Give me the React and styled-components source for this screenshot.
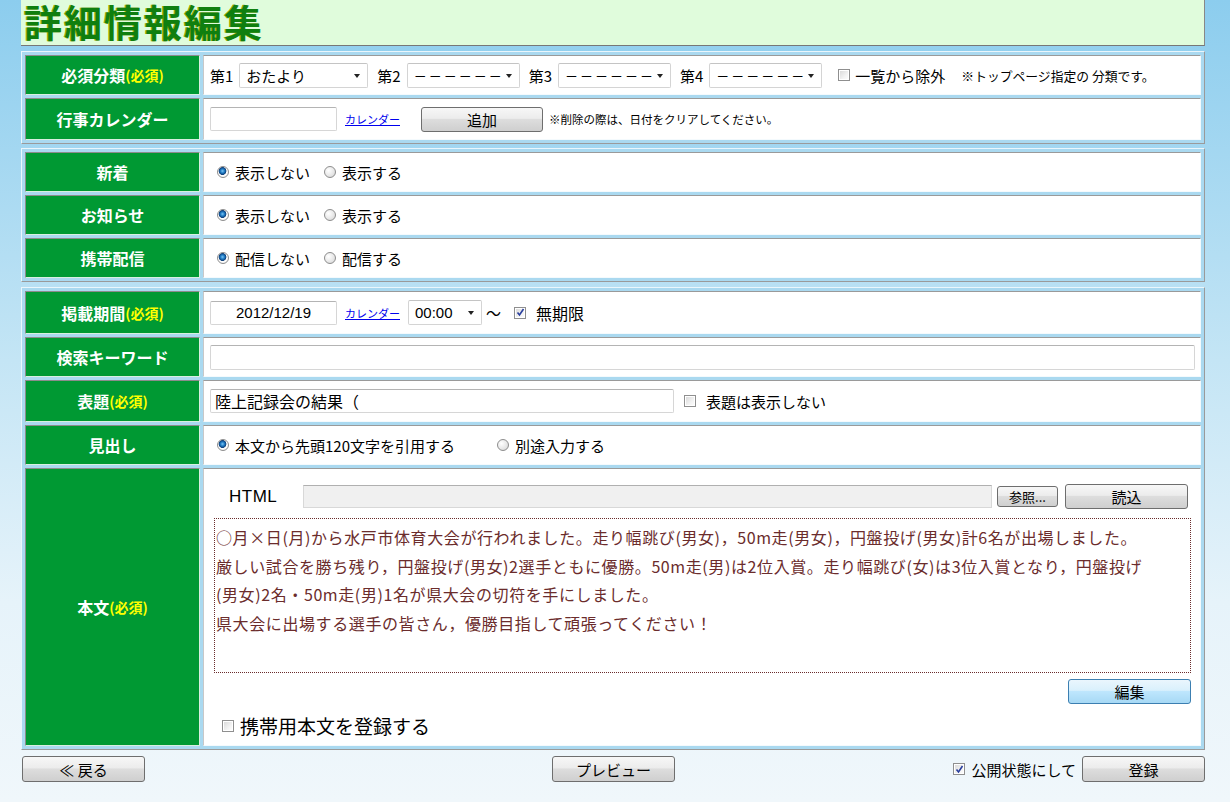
import React from "react";
import styled, { createGlobalStyle, css } from "styled-components";

const GlobalStyle = createGlobalStyle`
  html, body {
    margin: 0;
    padding: 0;
  }
  body {
    min-height: 802px;
    background: linear-gradient(180deg, #8ccdee 0%, #c4e5f5 45%, #e6f3fa 75%, #f0f7fb 100%);
    font-family: "Noto Sans CJK JP", "Noto Sans", sans-serif;
    color: #000;
  }
`;

const Page = styled.div`
  width: 1184px;
  margin-left: 21px;
`;

const Header = styled.h1`
  margin: 0;
  height: 46px;
  box-sizing: border-box;
  display: flex;
  align-items: center;
  padding: 0 0 3px 3px;
  background: #e0fcdc;
  border-right: 1px solid #888;
  border-bottom: 1px solid #777;
  font-size: 38px;
  line-height: 1;
  font-weight: 700;
  letter-spacing: 2px;
  color: #0f7f0f;
  text-shadow: -1px 0 0 #9fae00;
`;

const Table = styled.div`
  display: grid;
  grid-template-columns: 175px 1fr;
  gap: 3px;
  padding: 3px;
  margin-top: ${(p) => p.$mt || 5}px;
  background: #aad9f0;
  border: 1px solid;
  border-color: #eaf6fc #9a9a9a #9a9a9a #eaf6fc;
`;

const Label = styled.div`
  height: ${(p) => p.$h}px;
  box-sizing: border-box;
  background: #009933;
  border: 1px solid;
  border-color: #8c8c8c #d8efe0 #d8efe0 #8c8c8c;
  color: #fff;
  font-size: 16px;
  font-weight: 700;
  display: flex;
  align-items: center;
  justify-content: center;
`;

const Req = styled.span`
  color: #ffff00;
  font-size: 14px;
`;

const Cell = styled.div`
  box-sizing: border-box;
  background: #fff;
  border: 1px solid;
  border-color: #9a9a9a #f4fafd #f4fafd #c8c8c8;
  display: flex;
  align-items: center;
  padding-left: ${(p) => p.$pl || 6}px;
  font-size: 15px;
  white-space: nowrap;
`;

const BodyCell = styled.div`
  box-sizing: border-box;
  background: #fff;
  border: 1px solid;
  border-color: #9a9a9a #f4fafd #f4fafd #c8c8c8;
  display: flex;
  flex-direction: column;
  padding: 15px 9px 0 10px;
`;

const Num = styled.span`
  font-size: 15px;
  margin-right: ${(p) => p.$mr || 6}px;
  margin-left: ${(p) => p.$ml || 0}px;
`;

const SelectBox = styled.div`
  width: ${(p) => p.$w}px;
  height: 25px;
  box-sizing: border-box;
  border: 1px solid #d4d4d4;
  border-top-color: #c4c4c4;
  border-radius: 2px;
  display: flex;
  align-items: center;
  justify-content: space-between;
  padding: 0 7px 0 6px;
  font-size: 15px;
  background: #fff;
  &::after {
    content: "";
    border-left: 3.5px solid transparent;
    border-right: 3.5px solid transparent;
    border-top: 4px solid #222;
    margin-top: 1px;
  }
`;

const Dashes = styled.span`
  letter-spacing: 2px;
  font-size: 13px;
`;

const Input = styled.div`
  width: ${(p) => p.$w}px;
  height: ${(p) => p.$hgt || 24}px;
  box-sizing: border-box;
  border: 1px solid #d6d6d6;
  border-top-color: #b4b4b4;
  border-radius: 2px;
  display: flex;
  align-items: center;
  justify-content: ${(p) => (p.$center ? "center" : "flex-start")};
  padding: 0 4px;
  font-size: ${(p) => (p.$center ? 15 : 16)}px;
  font-family: ${(p) => (p.$center ? '"Liberation Sans", Arial, sans-serif' : "inherit")};
  background: #fff;
`;

const CalLink = styled.a`
  color: #0000ee;
  text-decoration: underline;
  font-size: 11px;
  margin: 0 8px 0 8px;
  cursor: pointer;
`;

const Btn = styled.button`
  width: ${(p) => p.$w}px;
  height: ${(p) => p.$hgt || 26}px;
  box-sizing: border-box;
  border: 1px solid #6e6e6e;
  border-radius: 3px;
  background: linear-gradient(180deg, #f7f7f7 0%, #ececec 45%, #dddddd 50%, #cfcfcf 100%);
  font-family: "Noto Sans CJK JP", sans-serif;
  font-size: ${(p) => p.$fs || 15}px;
  color: #000;
  padding: 0;
  line-height: 1;
  cursor: pointer;
  ${(p) =>
    p.$blue &&
    css`
      border-color: #3c7fb1;
      background: linear-gradient(180deg, #eaf6fd 0%, #d9f0fc 45%, #bee6fd 50%, #a7d9f5 100%);
    `}
`;

const Note = styled.span`
  font-size: ${(p) => p.$fs || 12}px;
  margin-left: ${(p) => p.$ml || 0}px;
`;

const RadioDot = styled.span`
  display: inline-block;
  width: 12px;
  height: 12px;
  box-sizing: border-box;
  border-radius: 50%;
  border: 1px solid #8d8d8d;
  background: radial-gradient(circle at 35% 35%, #ffffff 0%, #e6e6e6 60%, #cfcfcf 100%);
  ${(p) =>
    p.$on &&
    css`
      background: radial-gradient(circle at 45% 40%, #7cc4f2 0px, #1f7bc4 2px, #0d3f7a 3.6px, #ffffff 4.2px, #e8e8e8 100%);
    `}
`;

const Option = styled.label`
  display: inline-flex;
  align-items: center;
  gap: 6px;
  margin-right: ${(p) => p.$mr || 14}px;
  font-size: 15px;
`;

const CheckBox = styled.span`
  display: inline-flex;
  align-items: center;
  justify-content: center;
  width: 12px;
  height: 12px;
  box-sizing: border-box;
  border: 1px solid #8f8f8f;
  background: linear-gradient(135deg, #d6d6d6 0%, #f2f2f2 60%, #ffffff 100%);
  box-shadow: inset 0 0 0 1px #ffffff;
`;

const CheckLabel = styled.label`
  display: inline-flex;
  align-items: center;
  gap: ${(p) => p.$gap || 6}px;
  font-size: ${(p) => p.$fs || 15}px;
  margin-left: ${(p) => p.$ml || 0}px;
`;

const Tilde = styled.span`
  font-size: 15px;
  margin: 0 13px 0 4px;
`;

const HtmlRow = styled.div`
  display: flex;
  align-items: center;
  height: 25px;
  padding: 0 3px 0 15px;
`;

const HtmlTag = styled.span`
  font-family: "Liberation Sans", Arial, sans-serif;
  font-size: 17px;
  width: 74px;
  letter-spacing: 0.5px;
`;

const FileField = styled.div`
  flex: 1;
  height: 23px;
  box-sizing: border-box;
  background: #f0f0f0;
  border: 1px solid #d8d8d8;
  border-top-color: #b0b0b0;
  margin-right: 5px;
`;

const BodyText = styled.div`
  margin-top: 9px;
  height: 155px;
  box-sizing: border-box;
  border: 1px dotted #6b2c2c;
  padding: 4px 1px 0;
  color: #6b2c2c;
  font-size: 16px;
  line-height: 28.5px;
  white-space: pre;
  letter-spacing: 0.6px;
`;

const EditRow = styled.div`
  display: flex;
  justify-content: flex-end;
  margin-top: 6px;
`;

const MobileRow = styled.div`
  margin-top: 8px;
  padding-left: 8px;
`;

const Footer = styled.div`
  display: grid;
  grid-template-columns: 1fr auto 1fr;
  align-items: center;
  margin-top: 6px;
  padding-left: 1px;
`;

const FooterRight = styled.div`
  display: flex;
  align-items: center;
  justify-content: flex-end;
  gap: 6px;
`;

const Radio = ({ on, children, mr }) => (
  <Option $mr={mr}>
    <RadioDot $on={on} />
    {children}
  </Option>
);

const Check = ({ on, children, fs, ml, gap }) => (
  <CheckLabel $fs={fs} $ml={ml} $gap={gap}>
    <CheckBox>
      {on && (
        <svg width="9" height="9" viewBox="0 0 9 9">
          <path d="M1.5 4.5 L3.5 7 L7.5 1" fill="none" stroke="#2a3f9e" strokeWidth="1.6" />
        </svg>
      )}
    </CheckBox>
    {children}
  </CheckLabel>
);

const bodyLines = [
  "○月×日(月)から水戸市体育大会が行われました。走り幅跳び(男女)，50m走(男女)，円盤投げ(男女)計6名が出場しました。",
  "厳しい試合を勝ち残り，円盤投げ(男女)2選手ともに優勝。50m走(男)は2位入賞。走り幅跳び(女)は3位入賞となり，円盤投げ",
  "(男女)2名・50m走(男)1名が県大会の切符を手にしました。",
  "県大会に出場する選手の皆さん，優勝目指して頑張ってください！",
];

export default function App() {
  return (
    <>
      <GlobalStyle />
      <Page>
        <Header>詳細情報編集</Header>

        <Table $mt={5}>
          <Label $h={40}>
            必須分類<Req>(必須)</Req>
          </Label>
          <Cell>
            <Num>第1</Num>
            <SelectBox $w={129}>おたより</SelectBox>
            <Num $ml={9}>第2</Num>
            <SelectBox $w={113}>
              <Dashes>－－－－－－</Dashes>
            </SelectBox>
            <Num $ml={9}>第3</Num>
            <SelectBox $w={113}>
              <Dashes>－－－－－－</Dashes>
            </SelectBox>
            <Num $ml={9}>第4</Num>
            <SelectBox $w={113}>
              <Dashes>－－－－－－</Dashes>
            </SelectBox>
            <Check ml={16} gap={5}>一覧から除外</Check>
            <Note $ml={16} $fs={12.8}>※トップページ指定の 分類です。</Note>
          </Cell>

          <Label $h={42}>行事カレンダー</Label>
          <Cell>
            <Input $w={127} />
            <CalLink>カレンダー</CalLink>
            <Btn $w={122} $hgt={25} style={{ marginLeft: 13, marginRight: 6 }}>
              追加
            </Btn>
            <Note $fs={11.5}>※削除の際は、日付をクリアしてください。</Note>
          </Cell>
        </Table>

        <Table $mt={4}>
          <Label $h={40}>新着</Label>
          <Cell $pl={13}>
            <Radio on>表示しない</Radio>
            <Radio>表示する</Radio>
          </Cell>
          <Label $h={40}>お知らせ</Label>
          <Cell $pl={13}>
            <Radio on>表示しない</Radio>
            <Radio>表示する</Radio>
          </Cell>
          <Label $h={40}>携帯配信</Label>
          <Cell $pl={13}>
            <Radio on>配信しない</Radio>
            <Radio>配信する</Radio>
          </Cell>
        </Table>

        <Table $mt={5}>
          <Label $h={43}>
            掲載期間<Req>(必須)</Req>
          </Label>
          <Cell>
            <Input $w={127} $center>
              2012/12/19
            </Input>
            <CalLink>カレンダー</CalLink>
            <SelectBox $w={74}>
              <span style={{ fontFamily: '"Liberation Sans", Arial, sans-serif' }}>00:00</span>
            </SelectBox>
            <Tilde>～</Tilde>
            <Check on gap={10} fs={16}>無期限</Check>
          </Cell>

          <Label $h={40}>検索キーワード</Label>
          <Cell>
            <Input $w={985} $hgt={25} />
          </Cell>

          <Label $h={42}>
            表題<Req>(必須)</Req>
          </Label>
          <Cell>
            <Input $w={464} $hgt={24}>陸上記録会の結果（</Input>
            <Check ml={10} gap={10}>表題は表示しない</Check>
          </Cell>

          <Label $h={40}>見出し</Label>
          <Cell $pl={13}>
            <Radio on mr={42}>本文から先頭120文字を引用する</Radio>
            <Radio>別途入力する</Radio>
          </Cell>

          <Label $h={278}>
            本文<Req>(必須)</Req>
          </Label>
          <BodyCell>
            <HtmlRow>
              <HtmlTag>HTML</HtmlTag>
              <FileField />
              <Btn $w={61} $hgt={21} $fs={13} style={{ marginRight: 7 }}>
                参照...
              </Btn>
              <Btn $w={123} $hgt={25}>
                読込
              </Btn>
            </HtmlRow>
            <BodyText>{bodyLines.join("\n")}</BodyText>
            <EditRow>
              <Btn $w={123} $hgt={25} $blue>
                編集
              </Btn>
            </EditRow>
            <MobileRow>
              <Check fs={19} gap={6}>携帯用本文を登録する</Check>
            </MobileRow>
          </BodyCell>
        </Table>

        <Footer>
          <div>
            <Btn $w={123}>≪ 戻る</Btn>
          </div>
          <Btn $w={123}>プレビュー</Btn>
          <FooterRight>
            <Check on fs={15} gap={6}>公開状態にして</Check>
            <Btn $w={123}>登録</Btn>
          </FooterRight>
        </Footer>
      </Page>
    </>
  );
}
